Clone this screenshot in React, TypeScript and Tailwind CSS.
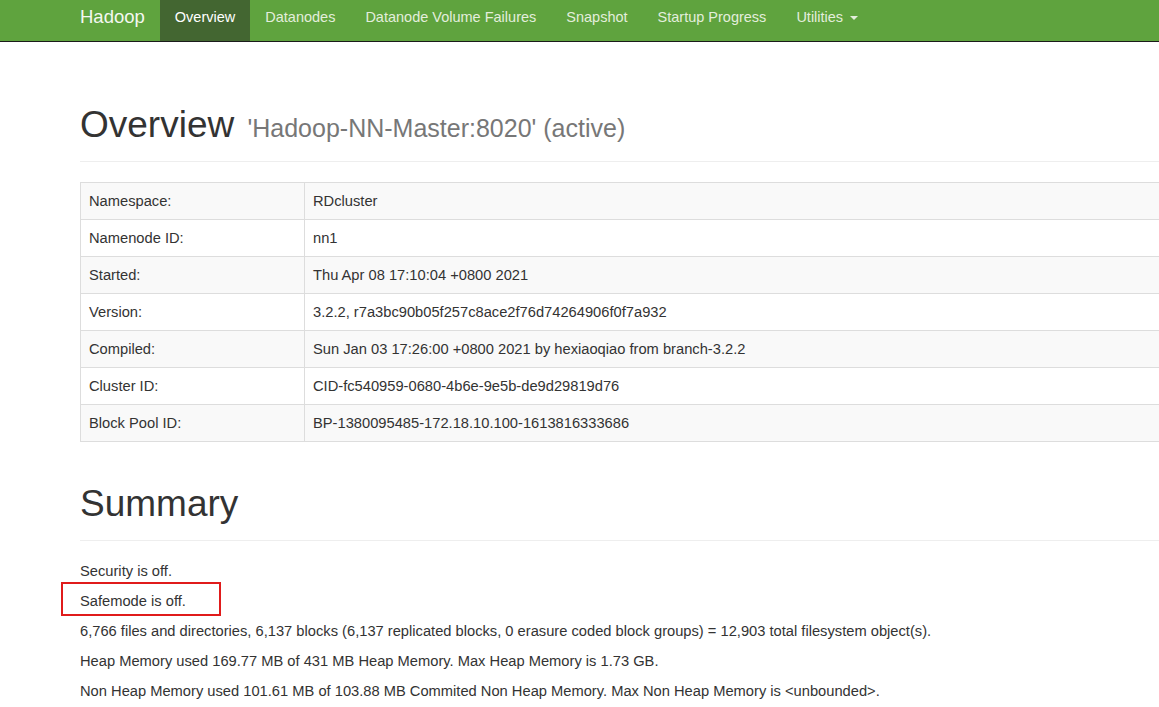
import React from "react";

const navItems = [
  "Overview",
  "Datanodes",
  "Datanode Volume Failures",
  "Snapshot",
  "Startup Progress",
];

const overviewRows: [string, string][] = [
  ["Namespace:", "RDcluster"],
  ["Namenode ID:", "nn1"],
  ["Started:", "Thu Apr 08 17:10:04 +0800 2021"],
  ["Version:", "3.2.2, r7a3bc90b05f257c8ace2f76d74264906f0f7a932"],
  ["Compiled:", "Sun Jan 03 17:26:00 +0800 2021 by hexiaoqiao from branch-3.2.2"],
  ["Cluster ID:", "CID-fc540959-0680-4b6e-9e5b-de9d29819d76"],
  ["Block Pool ID:", "BP-1380095485-172.18.10.100-1613816333686"],
];

const summaryLines = [
  "6,766 files and directories, 6,137 blocks (6,137 replicated blocks, 0 erasure coded block groups) = 12,903 total filesystem object(s).",
  "Heap Memory used 169.77 MB of 431 MB Heap Memory. Max Heap Memory is 1.73 GB.",
  "Non Heap Memory used 101.61 MB of 103.88 MB Commited Non Heap Memory. Max Non Heap Memory is <unbounded>.",
];

function Navbar() {
  return (
    <nav className="h-[42px] border-b border-[#1b1b1b] bg-[#5fa33e]">
      <div className="flex h-[41px] items-start pl-[80px]">
        <span className="mr-[15px] pt-[4px] text-[18.5px] leading-[26px] text-[#f4f8f1]">Hadoop</span>
        {navItems.map((item, i) => (
          <a
            key={item}
            className={`h-[41px] px-[15px] pt-[7px] text-[14.5px] leading-[20px] ${
              i === 0 ? "bg-[#436631] text-white" : "text-[#e3eedc]"
            }`}
          >
            {item}
          </a>
        ))}
        <a className="flex h-[41px] items-start px-[15px] pt-[7px] text-[14.5px] leading-[20px] text-[#e3eedc]">
          Utilities
          <span className="ml-[7px] mt-[9px] h-0 w-0 border-x-[4px] border-t-[4px] border-x-transparent border-t-[#e3eedc]" />
        </a>
      </div>
    </nav>
  );
}

export default function App() {
  return (
    <div
      className="w-[1159px] h-[707px] overflow-hidden bg-white text-[#333] text-[14.7px] leading-[20px]"
      style={{ fontFamily: '"Liberation Sans", Arial, sans-serif' }}
    >
      <Navbar />
      <div className="w-[1220px] pl-[80px]">
        <div className="mt-[63px] mb-[20px] border-b border-[#eee]">
          <h1 className="mb-[13px] text-[37px] leading-[40px] font-medium">
            Overview{" "}
            <small className="ml-[3px] text-[25px] font-normal text-[#777]">
              'Hadoop-NN-Master:8020' (active)
            </small>
          </h1>
        </div>

        <table className="w-[1140px] border-collapse border border-[#ddd]">
          <tbody>
            {overviewRows.map(([k, v], i) => (
              <tr key={k} className={i % 2 === 0 ? "bg-[#f9f9f9]" : "bg-white"}>
                <th className="w-[224px] border border-[#ddd] px-[8px] py-[8px] text-left font-normal">{k}</th>
                <td className="border border-[#ddd] px-[8px] py-[8px]">{v}</td>
              </tr>
            ))}
          </tbody>
        </table>

        <div className="mt-[42px] mb-[20px] border-b border-[#eee]">
          <h1 className="mb-[16px] text-[37px] leading-[40px] font-medium">Summary</h1>
        </div>

        <p className="mb-[10px]">Security is off.</p>
        <p className="relative mb-[10px]">
          Safemode is off.
          <span className="absolute left-[-19px] top-[-9px] h-[34px] w-[160px] border-2 border-[#e01b1b]" />
        </p>
        {summaryLines.map((line) => (
          <p key={line} className="mb-[10px]">
            {line}
          </p>
        ))}
      </div>
    </div>
  );
}
